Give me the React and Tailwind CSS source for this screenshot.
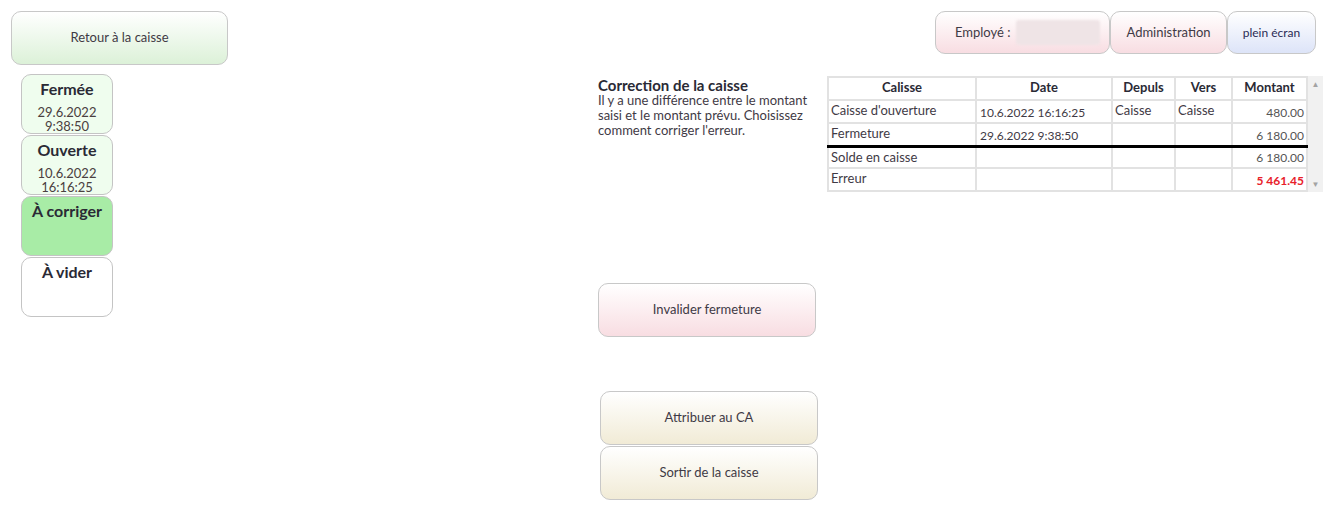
import React from "react";

const font = { fontFamily: "Lato, 'Noto Sans', sans-serif" };

const StatusCard = ({ title, lines, bg }) => (
  <div
    className={`w-[92px] h-[60px] rounded-[10px] border border-[#c4c4c4] ${bg} flex flex-col items-center text-[#2a2a35]`}
  >
    <div className="text-[16px] font-bold leading-[20px] mt-[4px] mb-[6px]">{title}</div>
    {lines.map((l) => (
      <div key={l} className="text-[13px] leading-[14px] text-[#4a4040]">
        {l}
      </div>
    ))}
  </div>
);

const rows = [
  ["Caisse d'ouverture", "10.6.2022 16:16:25", "Caisse", "Caisse", "480.00"],
  ["Fermeture", "29.6.2022 9:38:50", "", "", "6 180.00"],
];

function App() {
  return (
    <div className="w-[1327px] h-[520px] bg-white flex text-[#3b3540]" style={font}>
      {/* colonne gauche */}
      <div className="w-[240px] shrink-0 pt-[11px] pl-[11px]">
        <button className="w-[217px] h-[54px] rounded-[10px] border border-[#c8c8c8] bg-gradient-to-b from-white to-[#dcf1d8] text-[13px] text-[#3f3a45]">
          Retour à la caisse
        </button>
        <div className="mt-[9px] ml-[10px] flex flex-col gap-[1px]">
          <StatusCard title="Fermée" lines={["29.6.2022", "9:38:50"]} bg="bg-[#effdee]" />
          <StatusCard title="Ouverte" lines={["10.6.2022", "16:16:25"]} bg="bg-[#effdee]" />
          <StatusCard title="À corriger" lines={[]} bg="bg-[#a8eca6]" />
          <StatusCard title="À vider" lines={[]} bg="bg-white" />
        </div>
      </div>

      {/* zone principale */}
      <div className="flex-1 flex flex-col">
        <div className="flex justify-end pt-[11px] pr-[11px]">
          <button className="w-[175px] h-[43px] rounded-[10px] border border-[#c8c8c8] bg-gradient-to-b from-white to-[#f8dde2] text-[13px] text-[#3f3a45] flex items-center pl-[19px]">
            Employé :
            <span className="ml-[5px] w-[84px] h-[25px] rounded-[3px] bg-[#efe4e6] blur-[1px]" />
          </button>
          <button className="w-[117px] h-[43px] rounded-[10px] border border-[#c8c8c8] bg-gradient-to-b from-white to-[#f8dde2] text-[13px] text-[#3f3a45]">
            Administration
          </button>
          <button className="w-[89px] h-[43px] rounded-[10px] border border-[#c8c8c8] bg-gradient-to-b from-white to-[#dde4f8] text-[12px] text-[#2a2a55]">
            plein écran
          </button>
        </div>

        <div className="flex ml-[358px] mt-[22px]">
          <div className="w-[229px] shrink-0 pt-[1px]">
            <div className="text-[15px] font-bold leading-[16px] text-[#2a2a35]">Correction de la caisse</div>
            <p className="text-[13px] leading-[15px] text-[#3f3a45] w-[222px]">
              Il y a une différence entre le montant saisi et le montant prévu. Choisissez comment corriger l'erreur.
            </p>
          </div>
          <div className="flex">
            <table className="border-collapse text-[13px] text-[#3f3a45]">
              <thead>
                <tr className="h-[23px]">
                  <th className="w-[148px] border-2 border-[#e2e2e2] font-bold text-[#2a2a35] align-top">Calisse</th>
                  <th className="w-[136px] border-2 border-[#e2e2e2] font-bold text-[#2a2a35] align-top">Date</th>
                  <th className="w-[63px] border-2 border-[#e2e2e2] font-bold text-[#2a2a35] align-top">Depuls</th>
                  <th className="w-[57px] border-2 border-[#e2e2e2] font-bold text-[#2a2a35] align-top">Vers</th>
                  <th className="w-[75px] border-2 border-[#e2e2e2] font-bold text-[#2a2a35] align-top">Montant</th>
                </tr>
              </thead>
              <tbody>
                {rows.map((r, i) => (
                  <tr
                    key={r[0]}
                    className={`h-[23px] ${i === 1 ? "border-b-[3px] border-b-black" : ""}`}
                  >
                    <td className="border-2 border-[#e2e2e2] px-[2px] align-top">{r[0]}</td>
                    <td className="border-2 border-[#e2e2e2] px-[3px] text-[12px] align-bottom">{r[1]}</td>
                    <td className="border-2 border-[#e2e2e2] px-[2px] align-top">{r[2]}</td>
                    <td className="border-2 border-[#e2e2e2] px-[2px] align-top">{r[3]}</td>
                    <td
                      className={`border-2 border-[#e2e2e2] px-[2px] text-right text-[12px] text-[#555] align-bottom ${
                        i === 1 ? "border-b-black border-b-[3px]" : ""
                      }`}
                    >
                      {r[4]}
                    </td>
                  </tr>
                ))}
                <tr className="h-[22px]">
                  <td className="border-2 border-[#e2e2e2] px-[2px] align-top">Solde en caisse</td>
                  <td className="border-2 border-[#e2e2e2]" />
                  <td className="border-2 border-[#e2e2e2]" />
                  <td className="border-2 border-[#e2e2e2]" />
                  <td className="border-2 border-[#e2e2e2] px-[2px] text-right text-[12px] text-[#555] align-bottom">6 180.00</td>
                </tr>
                <tr className="h-[23px]">
                  <td className="border-2 border-[#e2e2e2] px-[2px] align-top">Erreur</td>
                  <td className="border-2 border-[#e2e2e2]" />
                  <td className="border-2 border-[#e2e2e2]" />
                  <td className="border-2 border-[#e2e2e2]" />
                  <td className="border-2 border-[#e2e2e2] px-[2px] text-right text-[12px] font-bold text-[#e8202a] align-bottom">5 461.45</td>
                </tr>
              </tbody>
            </table>
            <div className="w-[15px] bg-[#f1f1f1] flex flex-col justify-between items-center py-[4px] text-[8px] text-[#a3a3a3] leading-none">
              <span>▲</span>
              <span>▼</span>
            </div>
          </div>
        </div>

        <div className="ml-[358px] mt-[91px]">
          <button className="w-[218px] h-[54px] rounded-[10px] border border-[#c8c8c8] bg-gradient-to-b from-white to-[#f8dde2] text-[13px] text-[#3f3a45]">
            Invalider fermeture
          </button>
        </div>

        <div className="ml-[360px] mt-[54px] flex flex-col gap-[1px]">
          <button className="w-[218px] h-[54px] rounded-[10px] border border-[#c8c8c8] bg-gradient-to-b from-white to-[#f1ebd6] text-[13px] text-[#3f3a45]">
            Attribuer au CA
          </button>
          <button className="w-[218px] h-[54px] rounded-[10px] border border-[#c8c8c8] bg-gradient-to-b from-white to-[#f1ebd6] text-[13px] text-[#3f3a45]">
            Sortir de la caisse
          </button>
        </div>
      </div>
    </div>
  );
}

export default App;
